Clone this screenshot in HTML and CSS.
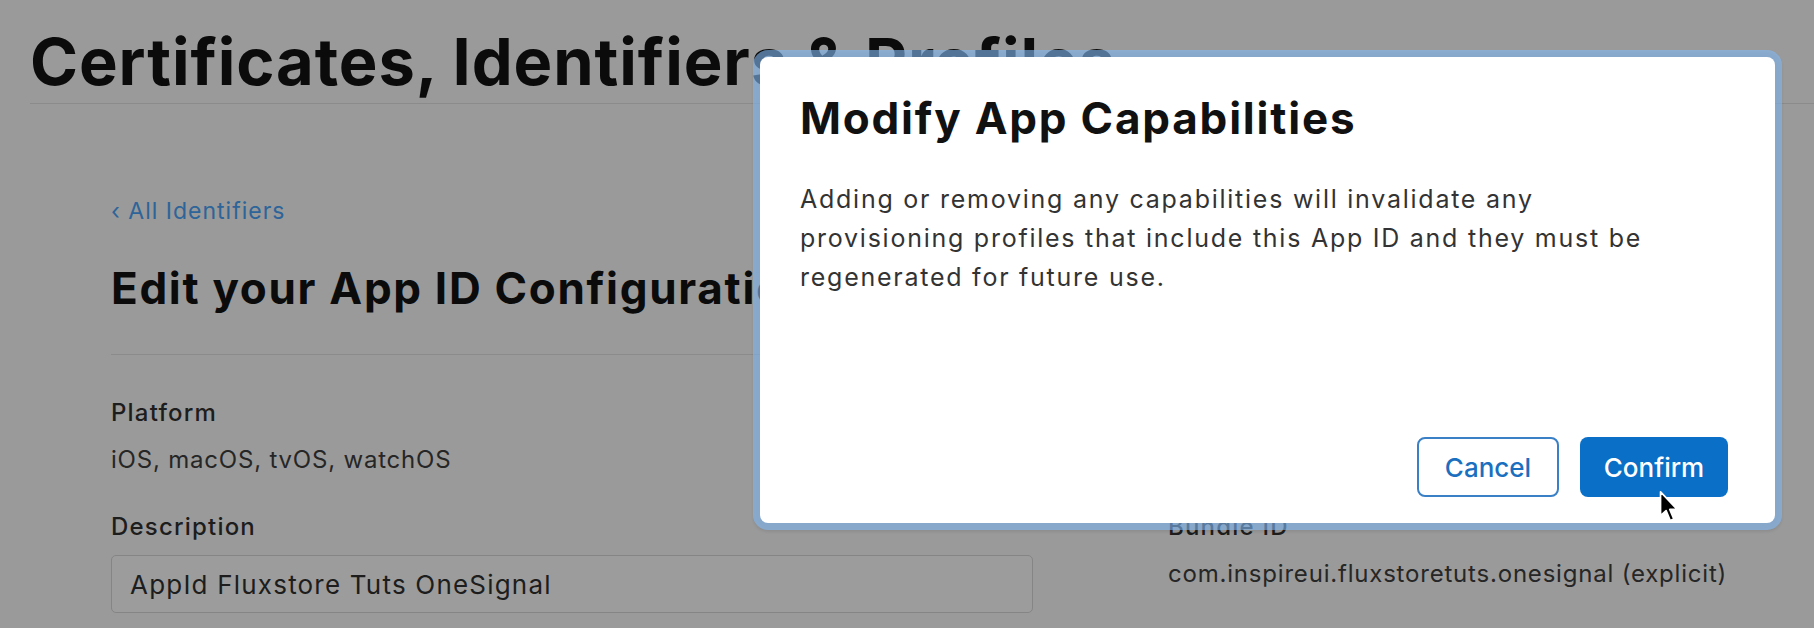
FILE: index.html
```html
<!DOCTYPE html>
<html lang="en">
<head>
    <meta charset="UTF-8">
    <meta name="viewport" content="width=device-width, initial-scale=1.0">
    <title>Certificates, Identifiers &amp; Profiles</title>
    <link rel="stylesheet" href="styles.css">
</head>
<body>
    <header class="page-head">
        <h1>Certificates, Identifiers &amp; Profiles</h1>
    </header>

    <main class="content">
        <a class="back-link" href="#">&lsaquo; All Identifiers</a>
        <h2 class="section-title">Edit your App ID Configuration</h2>

        <div class="fields">
            <div class="field">
                <div class="field-label">Platform</div>
                <div class="field-value">iOS, macOS, tvOS, watchOS</div>
            </div>
            <div class="field">
                <div class="field-label">App ID Prefix</div>
                <div class="field-value">8E7P3X9Q2L (Team ID)</div>
            </div>
            <div class="field">
                <label class="field-label field-label-input" for="description">Description</label>
                <input class="text-input" type="text" id="description" value="AppId Fluxstore Tuts OneSignal">
            </div>
            <div class="field">
                <div class="field-label">Bundle ID</div>
                <div class="field-value">com.inspireui.fluxstoretuts.onesignal (explicit)</div>
            </div>
        </div>
    </main>

    <div class="modal">
        <h3 class="modal-title">Modify App Capabilities</h3>
        <p class="modal-text">Adding or removing any capabilities will invalidate any provisioning profiles that include this App ID and they must be regenerated for future use.</p>
        <div class="modal-actions">
            <button class="btn btn-outline" type="button">Cancel</button>
            <button class="btn btn-primary" type="button">Confirm</button>
        </div>
    </div>

    <svg class="cursor" width="20" height="33" viewBox="0 0 13 21">
        <path d="M1 1 L1 16.5 L4.6 13.2 L7.3 19.6 L9.6 18.6 L7 12.4 L11.8 12.4 Z" fill="#000" stroke="#fff" stroke-width="1.1" stroke-linejoin="round"/>
    </svg>
</body>
</html>
```

FILE: styles.css
```css
body {
    font-family: 'Inter', 'Noto Sans', sans-serif;
    background-color: #9a9a9a;
    color: #1f1f1f;
    margin: 0;
    height: 628px;
    overflow: hidden;
}
.page-head {
    margin-left: 30px;
    padding: 29px 0 9px 0;
    border-bottom: 1px solid #8b8b8b;
}
.page-head h1 {
    margin: 0;
    font-size: 65px;
    line-height: 65px;
    font-weight: 700;
    letter-spacing: 0.9px;
    color: #0b0b0b;
}
.content {
    padding: 96px 111px 0 111px;
}
.back-link {
    display: block;
    font-size: 23px;
    line-height: 22px;
    letter-spacing: 1px;
    color: #2d6499;
    text-decoration: none;
}
.section-title {
    margin: 44px 0 0 0;
    padding-bottom: 44px;
    font-size: 44px;
    line-height: 44px;
    font-weight: 700;
    letter-spacing: 1.7px;
    color: #0b0b0b;
    border-bottom: 1px solid #8b8b8b;
}
.fields {
    display: grid;
    grid-template-columns: 922px 1fr;
    column-gap: 135px;
    row-gap: 45px;
    padding-top: 47px;
}
.field-label {
    display: block;
    font-size: 24px;
    line-height: 22px;
    font-weight: 500;
    letter-spacing: 1.2px;
    color: #1d1d1d;
    margin-bottom: 25px;
}
.field-label-input {
    margin-bottom: 17px;
}
.field-value {
    font-size: 24px;
    line-height: 22px;
    letter-spacing: 0.8px;
    white-space: nowrap;
    color: #262626;
}
.text-input {
    box-sizing: border-box;
    width: 100%;
    height: 58px;
    padding: 0 18px;
    font-family: inherit;
    font-size: 26px;
    letter-spacing: 1.2px;
    color: #1d1d1d;
    background-color: #9c9c9c;
    border: 1px solid #858585;
    border-radius: 5px;
}
.modal {
    position: absolute;
    left: 760px;
    top: 57px;
    width: 1015px;
    height: 466px;
    box-sizing: border-box;
    padding: 39px 47px 26px 40px;
    display: flex;
    flex-direction: column;
    background-color: #fff;
    border-radius: 8px;
    box-shadow: 0 0 0 7px rgba(132, 186, 245, 0.6), 0 2px 3px 7px rgba(0, 0, 0, 0.08);
}
.modal-title {
    margin: 0;
    font-size: 44px;
    line-height: 44px;
    font-weight: 700;
    letter-spacing: 1.8px;
    color: #111;
}
.modal-text {
    margin: 40px 0 0 0;
    max-width: 870px;
    font-size: 25px;
    line-height: 39px;
    letter-spacing: 1.75px;
    color: #333;
}
.modal-actions {
    margin-top: auto;
    display: flex;
    justify-content: flex-end;
    gap: 21px;
}
.btn {
    height: 60px;
    font-family: inherit;
    font-size: 26px;
    font-weight: 500;
    border-radius: 8px;
    cursor: pointer;
}
.btn-outline {
    width: 142px;
    background-color: #fff;
    color: #1b6fbf;
    border: 2px solid #3a80c6;
}
.btn-primary {
    width: 148px;
    background-color: #0a6fc6;
    color: #fff;
    border: none;
}
.cursor {
    position: absolute;
    left: 1659px;
    top: 490px;
}
```
